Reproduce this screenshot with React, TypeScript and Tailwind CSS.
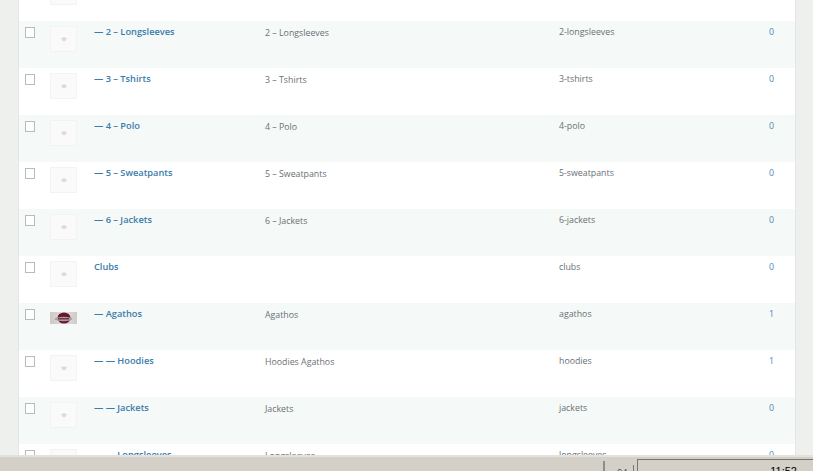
import React from "react";

type Row = {
  name: string;
  description: string;
  slug: string;
  count: number;
  logo?: boolean;
};

const rows: Row[] = [
  { name: "", description: "", slug: "", count: -1 },
  { name: "— 2 – Longsleeves", description: "2 – Longsleeves", slug: "2-longsleeves", count: 0 },
  { name: "— 3 – Tshirts", description: "3 – Tshirts", slug: "3-tshirts", count: 0 },
  { name: "— 4 – Polo", description: "4 – Polo", slug: "4-polo", count: 0 },
  { name: "— 5 – Sweatpants", description: "5 – Sweatpants", slug: "5-sweatpants", count: 0 },
  { name: "— 6 – Jackets", description: "6 – Jackets", slug: "6-jackets", count: 0 },
  { name: "Clubs", description: "", slug: "clubs", count: 0 },
  { name: "— Agathos", description: "Agathos", slug: "agathos", count: 1, logo: true },
  { name: "— — Hoodies", description: "Hoodies Agathos", slug: "hoodies", count: 1 },
  { name: "— — Jackets", description: "Jackets", slug: "jackets", count: 0 },
  { name: "— — Longsleeves", description: "Longsleeves", slug: "longsleeves", count: 0 },
];

const Thumb = ({ logo }: { logo?: boolean }) => {
  if (logo) {
    return (
      <div className="mt-[4px] flex h-[12px] w-[27px] items-center justify-center bg-gradient-to-r from-[#cfc8c4] via-[#e2dedc] to-[#cfccc8]">
        <svg width="20" height="12" viewBox="0 0 20 12">
          <ellipse cx="10" cy="6" rx="6.5" ry="5.5" fill="#6d1230" />
          <ellipse cx="9.5" cy="7" rx="9" ry="2.2" fill="#a89da0" />
          <rect x="4" y="6" width="11" height="1.5" fill="#6d3a4c" />
        </svg>
      </div>
    );
  }
  return (
    <div className="flex h-[26px] w-[27px] items-center justify-center border border-[#f3f3f1] bg-[#fafafa]">
      <svg width="6" height="4" viewBox="0 0 6 4">
        <path d="M0 1.5 L3 0 L6 1.5 L4.5 4 L1.5 4 Z" fill="#dcdcda" />
      </svg>
    </div>
  );
};

export default function App() {
  return (
    <div
      className="flex h-[471px] w-[813px] flex-col overflow-hidden bg-[#eef0ee]"
      style={{ fontFamily: '"Open Sans", sans-serif' }}
    >
      <div className="min-h-0 flex-1 overflow-hidden">
        <div className="ml-[18px] mt-[-26px] w-[778px] border-x border-x-[#e4e6e4]">
          {rows.map((row, i) => (
            <div
              key={i}
              className={`flex h-[47px] items-start text-[8.8px] leading-[14px] ${
                i % 2 === 1 ? "bg-[#f5f9f7]" : "bg-white"
              }`}
            >
              <div className="ml-[6px] mt-[6px] h-[11px] w-[10px] shrink-0 border border-[#b8bcb9] bg-white" />
              <div className="ml-[15px] mt-[5px] w-[44px] shrink-0">
                <Thumb logo={row.logo} />
              </div>
              <div className="mt-[4px] w-[171px] shrink-0 text-[9.25px] font-semibold text-[#3a7cab]">
                {row.name}
              </div>
              <div className="mt-[5px] w-[294px] shrink-0 text-[#6b7075]">{row.description}</div>
              <div className="mt-[4px] w-[210px] shrink-0 text-[#6b7075]">{row.slug}</div>
              <div className="mt-[4px] w-[12px] shrink-0 text-[#4a8ab8]">
                {row.count >= 0 ? row.count : ""}
              </div>
            </div>
          ))}
        </div>
      </div>
      <div className="flex h-[16px] shrink-0 items-start border-t-2 border-t-[#e4e2de] bg-[#d4d0c8] pl-[603px]">
        <div className="mt-[4px] h-[12px] w-[2px] bg-[#8f8d88]" />
        <div className="ml-[12px] w-[16px] pt-[10px] text-[9px] leading-[12px] text-[#444]">04</div>
        <div className="mt-[8px] h-[8px] w-[1px] bg-[#77756f]" />
        <div
          className="ml-[3px] mt-[2px] flex h-[14px] flex-1 items-start justify-between overflow-hidden border-l border-t border-l-[#77756f] border-t-[#77756f] pl-[22px] pr-[16px] pt-[5px] text-[11px] leading-[12px] text-black"
          style={{ fontFamily: '"Liberation Sans", sans-serif' }}
        >
          <span className="pt-[4px] text-[#444]">Jun Th</span>
          <span>11:52</span>
        </div>
      </div>
    </div>
  );
}
